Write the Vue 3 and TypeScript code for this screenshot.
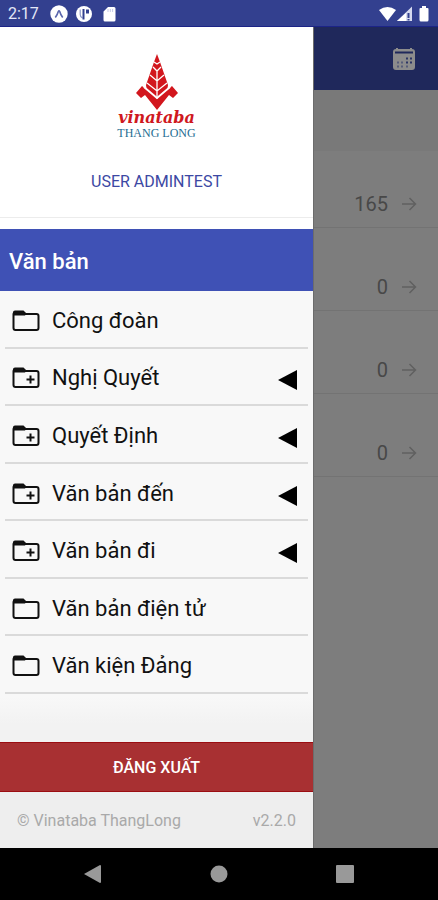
<script setup lang="ts">
interface MenuItem {
  label: string
  expandable: boolean
}

const items: MenuItem[] = [
  { label: 'Công đoàn', expandable: false },
  { label: 'Nghị Quyết', expandable: true },
  { label: 'Quyết Định', expandable: true },
  { label: 'Văn bản đến', expandable: true },
  { label: 'Văn bản đi', expandable: true },
  { label: 'Văn bản điện tử', expandable: false },
  { label: 'Văn kiện Đảng', expandable: false },
]

const counts: number[] = [165, 0, 0, 0]
</script>

<template>
  <div class="screen">
    <header class="status">
      <span class="time">2:17</span>
      <svg class="status-icon" viewBox="0 0 18 18" aria-hidden="true">
        <circle cx="9" cy="9" r="8.7" fill="#fff" />
        <path d="M5.3 12.500Q7.500 9.500 8.300 6.500Q9 5 9.700 6.500Q10.500 9.500 12.700 12.500" fill="none" stroke="#5b67ad" stroke-width="1.600" />
      </svg>
      <svg class="status-icon" viewBox="0 0 18 18" aria-hidden="true">
        <circle cx="9" cy="9" r="8" fill="#fff" />
        <path d="M5.200 4.500V9.500Q5.200 12 7.500 13" fill="none" stroke="#8d96c8" stroke-width="1.200" />
        <path d="M7.500 4H9.500V14.500H7.500z" fill="#33408f" />
        <path d="M11 4.500h3v4h-3z" fill="#33408f" />
      </svg>
      <svg class="status-icon" viewBox="0 0 18 18" aria-hidden="true">
        <path d="M8 2h6a1.500 1.500 0 0 1 1.500 1.500v11.500a1.500 1.500 0 0 1-1.500 1.500H5A1.500 1.500 0 0 1 3.500 15V6.500z" fill="#fff" />
        <path d="M8 4v3M10.300 4v3M12.600 4v3" stroke="#c5cae8" stroke-width="1" />
      </svg>
      <svg class="signals" viewBox="0 0 52 18" aria-hidden="true">
        <path d="M1 5Q9.500-1 18 5L9.500 16z" fill="#fff" />
        <path d="M34 1.500V16H19z" fill="#d5d9ef" />
        <path d="M28 8V16H19z" fill="#fff" />
        <path d="M30.500 8v5M30.500 14v1.500" stroke="#33408f" stroke-width="2" />
        <path d="M44 1h4v2h1.500a1 1 0 0 1 1 1v11a1.500 1.500 0 0 1-1.500 1.500h-6a1.500 1.500 0 0 1-1.500-1.500V4a1 1 0 0 1 1-1H44z" fill="#fff" />
      </svg>
    </header>

    <div class="body">
      <aside class="drawer">
        <div class="profile">
          <svg class="emblem" viewBox="0 0 42 56" aria-hidden="true">
            <path d="M21 0 24 8 32 31 31 38 21 46 11 38 10 31 18 8z" fill="#d2161d" />
            <path d="M21 17V45M17 13l4 4 4-4M14 21l7 6 7-6M11 29l10 8 10-8M18 8l3 2 3-2" fill="none" stroke="#fff" stroke-width="1.300" />
            <path d="M0 39 6 32 21 45 36 32 42 39 37 44 33 41 21 56 9 41 5 44z" fill="#d2161d" />
            <path d="M8 33l13 11 13-11" fill="none" stroke="#fff" stroke-width="1.800" />
          </svg>
          <span class="brand">vinataba</span>
          <span class="company">THANG LONG</span>
          <span class="user">USER ADMINTEST</span>
        </div>
        <h1 class="section">Văn bản</h1>
        <nav class="menu">
          <button v-for="item in items" :key="item.label" type="button" class="menu-item">
            <svg class="folder" viewBox="0 0 28 22" aria-hidden="true">
              <path d="M3.500 2H11l2 2h11.500a2 2 0 0 1 2 2V18a2 2 0 0 1-2 2h-21a2 2 0 0 1-2-2V4a2 2 0 0 1 2-2z" fill="none" stroke="#111" stroke-width="2" />
              <path d="M1 5.500V2.500a2 2 0 0 1 2-2h8.500L14.500 3.500 13 5.500z" fill="#111" />
              <path v-if="item.expandable" d="M18.500 8.500v8M14.500 12.500h8" stroke="#111" stroke-width="2" />
            </svg>
            <span class="label">{{ item.label }}</span>
            <svg v-if="item.expandable" class="caret" viewBox="0 0 20 20" aria-hidden="true">
              <path d="M20 0V20L1 10z" fill="#000" />
            </svg>
          </button>
        </nav>
        <button type="button" class="logout">ĐĂNG XUẤT</button>
        <footer class="footer">
          <span>© Vinataba ThangLong</span>
          <span>v2.2.0</span>
        </footer>
      </aside>

      <main class="page">
        <div class="toolbar">
          <button type="button" class="calendar" aria-label="Lịch">
            <svg viewBox="0 0 24 24" aria-hidden="true">
              <path d="M4 1h2v1h12V1h2v1a3 3 0 0 1 3 3v15a3 3 0 0 1-3 3H4a3 3 0 0 1-3-3V5a3 3 0 0 1 3-3z" fill="#8c8c8c" />
              <path d="M3 5.500h18" stroke="#1f285b" stroke-width="2" />
              <path d="M14 11.500h2M18 11.500h2M14 15.500h2M18 15.500h2" stroke="#2b3465" stroke-width="2" />
              <path d="M5 15.500h2M9 15.500h2M5 19.500h2M9 19.500h2M14 19.500h2" stroke="#565d7a" stroke-width="2" />
            </svg>
          </button>
        </div>
        <div class="filter"></div>
        <ul class="counts">
          <li v-for="(count, index) in counts" :key="index" class="count">
            <span>{{ count }}</span>
            <svg class="arrow" viewBox="0 0 16 16" aria-hidden="true">
              <path d="M1 8h13M8.500 2l6 6-6 6" fill="none" stroke="#606060" stroke-width="1.500" />
            </svg>
          </li>
        </ul>
      </main>
    </div>

    <div class="system">
      <button type="button" class="system-button" aria-label="Quay lại">
        <svg viewBox="0 0 18 18" aria-hidden="true"><path d="M16 0q1 0 1 1v16q0 1-1 1L0 9z" fill="#999" /></svg>
      </button>
      <button type="button" class="system-button" aria-label="Màn hình chính">
        <svg viewBox="0 0 18 18" aria-hidden="true"><circle cx="9" cy="9" r="8.500" fill="#999" /></svg>
      </button>
      <button type="button" class="system-button" aria-label="Ứng dụng gần đây">
        <svg viewBox="0 0 18 18" aria-hidden="true"><rect width="18" height="18" rx="1" fill="#999" /></svg>
      </button>
    </div>
  </div>
</template>

<style>
body {
  margin: 0;
}
</style>

<style scoped>
.screen {
  display: flex;
  flex-direction: column;
  min-height: 100vh;
  font-family: Roboto, "Liberation Sans", sans-serif;
  color: #111;
}
.screen * {
  box-sizing: border-box;
}
button {
  margin: 0;
  padding: 0;
  border: 0;
  background: none;
  font: inherit;
  color: inherit;
  cursor: pointer;
}
svg {
  display: block;
  flex: none;
}
.status {
  display: flex;
  align-items: center;
  gap: 7px;
  height: 27px;
  padding: 2px 8px 0;
  background: #33408f;
  border-bottom: 1px solid #1c2487;
  color: #e4e7f7;
}
.time {
  margin-right: 4px;
  font-size: 16px;
  line-height: 20px;
}
.status-icon {
  width: 18px;
  height: 18px;
}
.signals {
  width: 52px;
  height: 18px;
  margin-left: auto;
}
.body {
  display: grid;
  grid-template-columns: 313fr 125fr;
  flex: 1;
}
.drawer {
  display: flex;
  flex-direction: column;
  background: #f8f8f8;
}
.profile {
  display: flex;
  flex-direction: column;
  align-items: center;
  height: 191px;
  margin-bottom: 11px;
  padding-top: 27px;
  background: #fff;
  border-bottom: 1px solid #ececec;
  box-shadow: 0 11px #fff;
}
.emblem {
  width: 42px;
  height: 56px;
}
.brand {
  font: italic bold 16px/16px "DejaVu Serif", serif;
  color: #cf1820;
}
.company {
  font: 12px/14px "Liberation Serif", serif;
  color: #1e6d92;
}
.user {
  margin-top: 32px;
  font-size: 16px;
  line-height: 20px;
  color: #3c48a3;
}
.section {
  margin: 0;
  padding: 4px 9px 0;
  font-size: 22px;
  line-height: 58px;
  font-weight: 500;
  color: #fff;
  background: #3f51b5;
}
.menu {
  display: flex;
  flex: 1;
  flex-direction: column;
  padding: 0 5px 48px;
  background: linear-gradient(#f8f8f8 90%, #f2f2f2 96%);
}
.menu-item {
  display: flex;
  flex: 1 1 0;
  align-items: center;
  gap: 12px;
  min-height: 48px;
  padding: 4px 11px 0 7px;
  border-bottom: 2px solid #dadada;
  text-align: left;
}
.folder {
  width: 28px;
  height: 22px;
}
.label {
  flex: 1;
  font-size: 22px;
  line-height: 28px;
}
.caret {
  width: 20px;
  height: 20px;
  margin-top: 4px;
}
.logout {
  height: 50px;
  background: #a83032;
  border-top: 1px solid #9b0d12;
  border-bottom: 1px solid #9b0d12;
  color: #fff;
  font-size: 16px;
  font-weight: 500;
}
.footer {
  display: flex;
  justify-content: space-between;
  padding: 19px 17px 17px;
  background: #eee;
  color: #a9a9a9;
  font-size: 16px;
  line-height: 20px;
}
.page {
  background: #7d7d7d;
  border-left: 1px solid #6c6c6c;
}
.toolbar {
  display: flex;
  align-items: center;
  justify-content: flex-end;
  height: 63px;
  padding: 0 22px;
  background: #1f285b;
}
.calendar,
.calendar svg {
  width: 24px;
  height: 24px;
}
.filter {
  height: 61px;
  background: #797979;
}
.counts {
  display: flex;
  flex-direction: column;
  gap: 6px;
  margin: 0;
  padding: 0;
  list-style: none;
}
.count {
  display: flex;
  align-items: center;
  justify-content: flex-end;
  gap: 13px;
  padding: 41px 21px 11px 0;
  border-bottom: 1px solid #737373;
  color: #484848;
  font-size: 20px;
  line-height: 24px;
}
.arrow {
  width: 16px;
  height: 16px;
}
.system {
  display: flex;
  align-items: center;
  justify-content: center;
  gap: 108px;
  height: 52px;
  background: #000;
}
.system-button,
.system-button svg {
  width: 18px;
  height: 18px;
}
</style>
